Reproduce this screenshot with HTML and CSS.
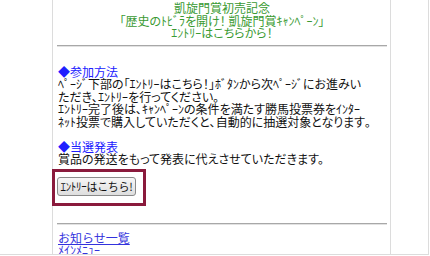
FILE: index.html
```html
<!DOCTYPE html>
<html lang="ja">
<head>
<meta charset="utf-8">
<link rel="stylesheet" href="styles.css">
</head>
<body>
<div class="frame">
  <div class="side"></div>
  <div class="main">
    <div class="title">凱旋門賞初売記念<br>「歴史のﾄﾋﾞﾗを開け！ 凱旋門賞ｷｬﾝﾍﾟｰﾝ」<br>ｴﾝﾄﾘｰはこちらから！</div>
    <hr class="rule">
    <div class="head">◆参加方法</div>
    <p class="text">ﾍﾟｰｼﾞ下部の「ｴﾝﾄﾘｰはこちら！」ﾎﾞﾀﾝから次ﾍﾟｰｼﾞにお進みい<br>ただき､ｴﾝﾄﾘｰを行ってください｡<br>ｴﾝﾄﾘｰ完了後は､ｷｬﾝﾍﾟｰﾝの条件を満たす勝馬投票券をｲﾝﾀｰ<br>ﾈｯﾄ投票で購入していただくと､自動的に抽選対象となります｡</p>
    <div class="head gap">◆当選発表</div>
    <p class="text">賞品の発送をもって発表に代えさせていただきます。</p>
    <div class="highlight"><button class="btn" type="button">ｴﾝﾄﾘｰはこちら!</button></div>
    <hr class="rule rule2">
    <a class="link" href="#">お知らせ一覧</a>
    <a class="link small" href="#">ﾒｲﾝﾒﾆｭｰ</a>
  </div>
  <div class="side"></div>
</div>
</body>
</html>
```
FILE: styles.css
```css
html, body {
  margin: 0;
  padding: 0;
  background: #fff;
}
body {
  font-family: "Noto Sans CJK JP", "Noto Sans", sans-serif;
  font-size: 12px;
  line-height: 12.5px;
  color: #111;
}
.frame {
  display: flex;
  width: 428px;
  height: 254px;
  border-right: 1px solid #dcdcdc;
  border-bottom: 1px solid #dcdcdc;
  overflow: hidden;
}
.side {
  flex: 0 0 52px;
}
.side:last-child {
  flex: 1 1 auto;
}
.main {
  flex: 0 0 330px;
  border-left: 1px solid #dcdcdc;
  border-right: 1px solid #dcdcdc;
  padding: 2px 3px 0 4px;
  display: flex;
  flex-direction: column;
  align-items: flex-start;
}
.title {
  align-self: stretch;
  text-align: center;
  color: #3a9a32;
  font-feature-settings: "palt";
}
.rule {
  align-self: stretch;
  margin: 5px 0 19px;
  border: 0;
  border-top: 1px solid #a8a8a8;
  border-bottom: 1px solid #e2e2e2;
  height: 0;
}
.head {
  color: #2020ff;
  padding-left: 1px;
}
.gap {
  margin-top: 12.5px;
}
.text {
  margin: 0;
  padding-left: 1px;
  white-space: nowrap;
  font-feature-settings: "palt";
}
.highlight {
  margin: 3px 0 0 -5px;
  border: 3px solid #8a1a3c;
  padding: 5px 7px 7px 2px;
}
.btn {
  display: block;
  width: 79px;
  height: 19px;
  padding: 0;
  font-family: "Noto Sans CJK JP", sans-serif;
  font-size: 11px;
  line-height: 15px;
  letter-spacing: -0.3px;
  color: #111;
  border: 1px solid #8a8a8a;
  border-radius: 3px;
  background: linear-gradient(#f6f6f6, #dedede);
}
.rule2 {
  margin: 17px 0 7px;
}
.link {
  color: #3333dd;
  text-decoration: underline;
  padding-left: 1px;
}
.small {
  font-size: 12px;
  line-height: 12px;
}
```
